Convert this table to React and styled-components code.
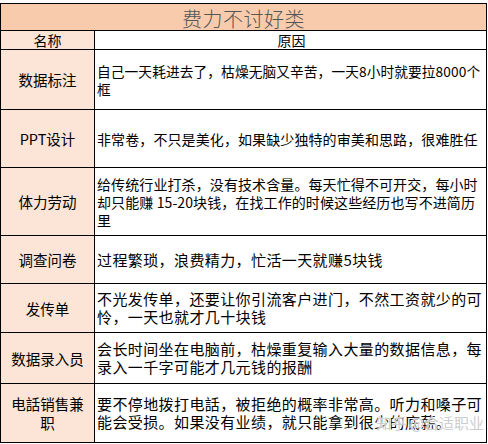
import React from 'react';
import styled, { createGlobalStyle } from 'styled-components';

const GlobalStyle = createGlobalStyle`
  html, body {
    margin: 0;
    padding: 0;
    background: #fff;
  }
  * {
    box-sizing: border-box;
  }
`;

// size: font size of the reason text, the picture mixes two sizes
const ROWS = [
  {
    name: ['数据标注'],
    height: 60,
    size: 13.7,
    lines: ['自己一天耗进去了，枯燥无脑又辛苦，一天8小时就要拉8000个', '框'],
  },
  {
    name: ['PPT设计'],
    height: 58,
    size: 14,
    lines: ['非常卷，不只是美化，如果缺少独特的审美和思路，很难胜任'],
  },
  {
    name: ['体力劳动'],
    height: 68,
    size: 14,
    lines: [
      '给传统行业打杀，没有技术含量。每天忙得不可开交，每小时',
      '却只能赚 15-20块钱，在找工作的时候这些经历也写不进简历',
      '里',
    ],
  },
  {
    name: ['调查问卷'],
    height: 48,
    size: 15,
    lines: ['过程繁琐，浪费精力，忙活一天就赚5块钱'],
  },
  {
    name: ['发传单'],
    height: 49,
    size: 15,
    lines: ['不光发传单，还要让你引流客户进门，不然工资就少的可', '怜，一天也就才几十块钱'],
  },
  {
    name: ['数据录入员'],
    height: 51,
    size: 15,
    lines: ['会长时间坐在电脑前，枯燥重复输入大量的数据信息，每', '录入一千字可能才几元钱的报酬'],
  },
  {
    name: ['电話销售兼', '职'],
    height: 58,
    size: 15,
    lines: ['要不停地拨打电話，被拒绝的概率非常高。听力和嗓子可', '能会受损。如果没有业绩，就只能拿到很少的底薪。'],
  },
];

const Wrap = styled.div`
  position: relative;
  width: 487px;
  margin-top: 3px;
  font-family: 'Noto Sans CJK SC', 'Noto Sans', sans-serif;
  color: #000;
`;

const Table = styled.div`
  border: 1px solid #000;
  display: flex;
  flex-direction: column;
`;

const TitleBar = styled.div`
  height: 27px;
  border-bottom: 1px solid #000;
  background: #f8cbad;
  display: flex;
  align-items: center;
  justify-content: center;
  padding-top: 2px;
  font-size: 20px;
  font-weight: 300;
  color: #555;
  letter-spacing: 0.5px;
`;

const Row = styled.div`
  display: grid;
  grid-template-columns: 94px 1fr;
  height: ${(p) => p.$height}px;
  border-bottom: ${(p) => (p.$last ? 'none' : '1px solid #000')};
`;

const NameCell = styled.div`
  background: #fce4d6;
  border-right: 1px solid #000;
  display: flex;
  flex-direction: column;
  align-items: center;
  justify-content: center;
  text-align: center;
  font-size: ${(p) => (p.$header ? '14px' : '14.5px')};
  line-height: ${(p) => (p.$header ? '18px' : '19px')};
`;

const ReasonCell = styled.div`
  display: flex;
  flex-direction: column;
  justify-content: center;
  align-items: ${(p) => (p.$header ? 'center' : 'flex-start')};
  padding-left: 2px;
  overflow: hidden;
  font-size: ${(p) => p.$size || 14}px;
  letter-spacing: ${(p) => (p.$size >= 15 ? '0.4px' : '0.1px')};
  line-height: 18px;
  white-space: nowrap;
`;

const HeaderText = styled.span`
  font-size: 14px;
  letter-spacing: 0;
`;

const Line = styled.span`
  display: block;
`;

const Watermark = styled.div`
  position: absolute;
  right: 3px;
  bottom: 10px;
  font-family: 'Noto Sans CJK SC', sans-serif;
  font-size: 15px;
  color: rgba(200, 200, 200, 0.9);
  text-shadow: 0 0 1px #fff, 0 0 2px #fff;
  pointer-events: none;
`;

const App = () => {
  return (
    <>
      <GlobalStyle />
      <Wrap>
        <Table>
          <TitleBar>费力不讨好类</TitleBar>
          <Row $height={19}>
            <NameCell $header>名称</NameCell>
            <ReasonCell $header>
              <HeaderText>原因</HeaderText>
            </ReasonCell>
          </Row>
          {ROWS.map((row, i) => (
            <Row key={i} $height={row.height} $last={i === ROWS.length - 1}>
              <NameCell>
                {row.name.map((n, j) => (
                  <Line key={j}>{n}</Line>
                ))}
              </NameCell>
              <ReasonCell $size={row.size}>
                {row.lines.map((l, j) => (
                  <Line key={j}>{l}</Line>
                ))}
              </ReasonCell>
            </Row>
          ))}
        </Table>
        <Watermark>知乎 @合适职业</Watermark>
      </Wrap>
    </>
  );
};

export default App;
